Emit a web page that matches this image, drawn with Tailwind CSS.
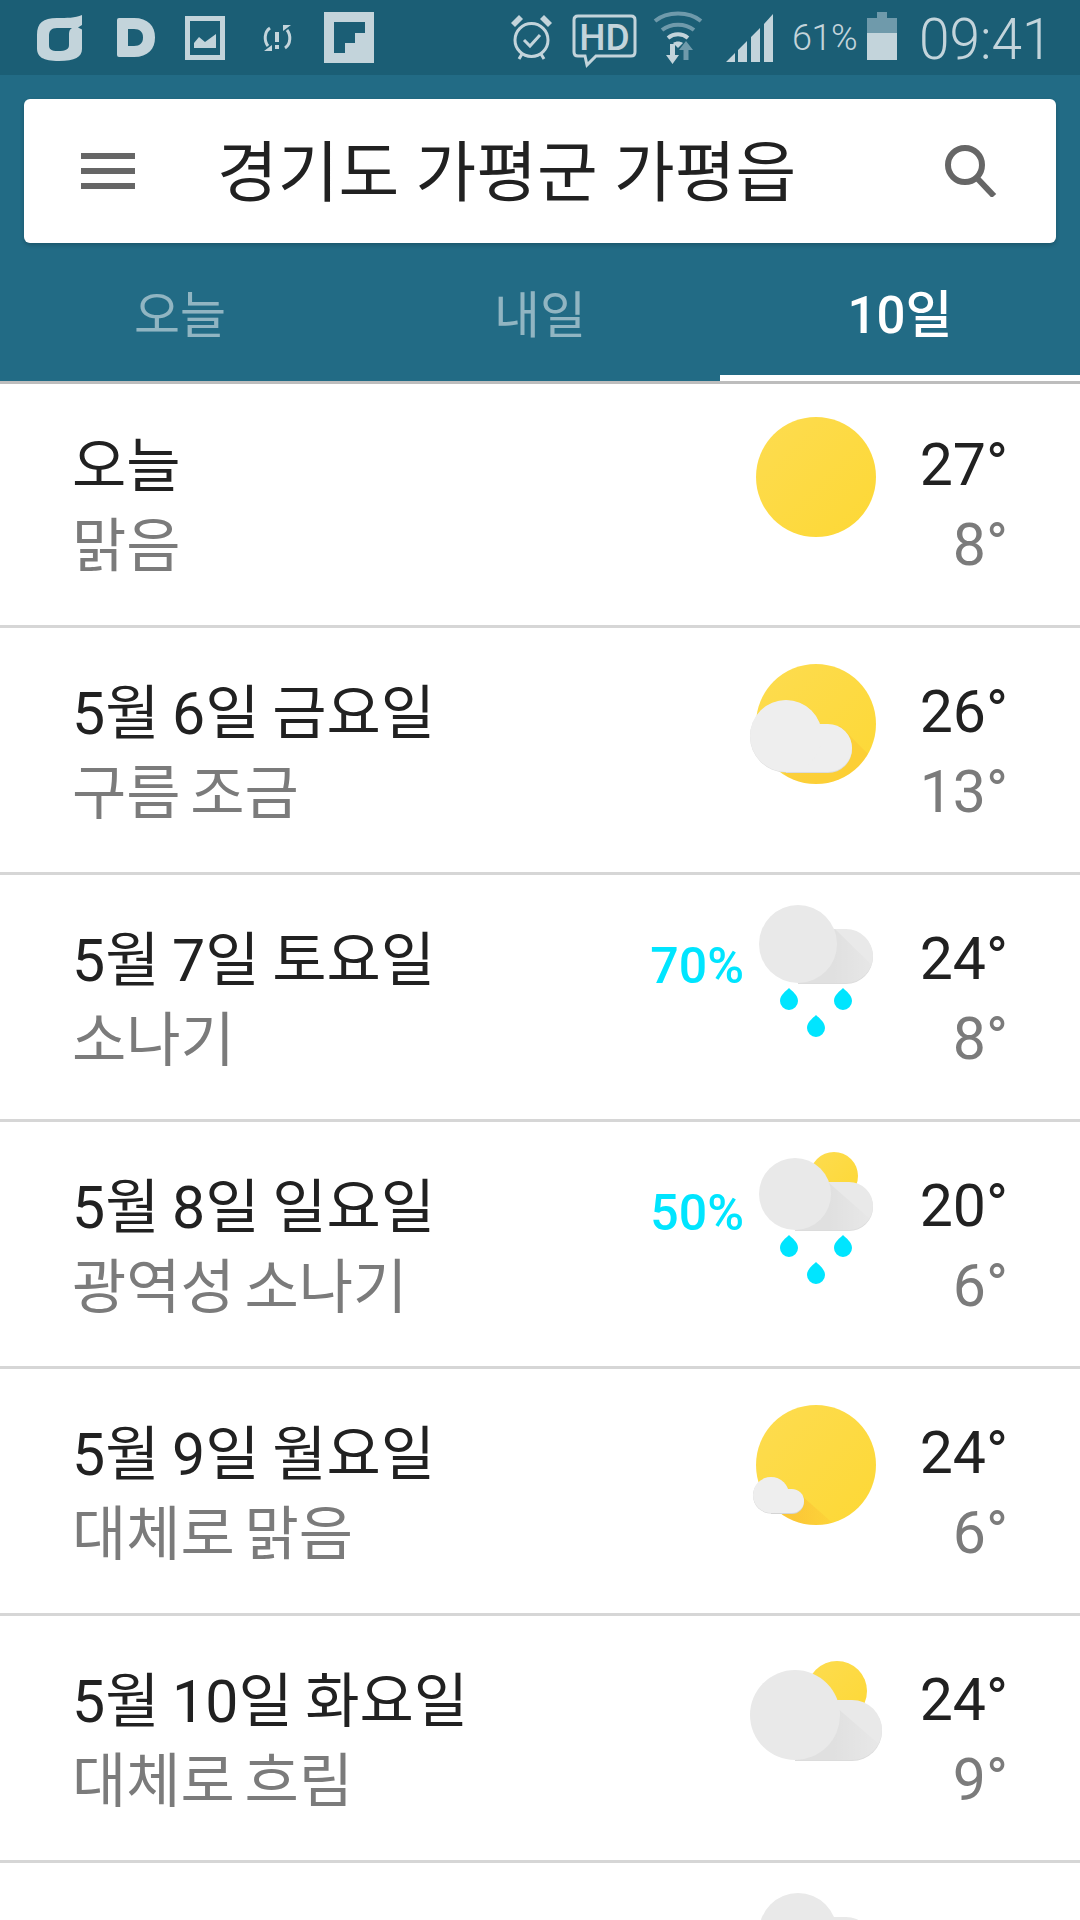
<!DOCTYPE html>
<html lang="ko">
<head>
    <meta charset="UTF-8">
    <meta name="viewport" content="width=device-width, initial-scale=1.0">
    <title>날씨</title>
    <script src="https://cdn.jsdelivr.net/npm/@tailwindcss/browser@4"></script>
</head>
<body class="bg-white w-[1080px] h-[1920px] overflow-hidden font-['Roboto','Noto_Sans_CJK_KR',sans-serif]">
    <!-- shared gradients -->
    <svg class="absolute w-0 h-0">
        <defs>
            <linearGradient id="sun" x1="0" y1="0" x2="1" y2="1"><stop offset="0" stop-color="#fddc50"/><stop offset="1" stop-color="#fdd835"/></linearGradient>
            <linearGradient id="shade"><stop offset="0.4" stop-color="#000000" stop-opacity="0.04"/><stop offset="1" stop-color="#000000" stop-opacity="0"/></linearGradient>
            <linearGradient id="sunshade"><stop offset="0.3" stop-color="#f57f17" stop-opacity="0.2"/><stop offset="1" stop-color="#f57f17" stop-opacity="0.02"/></linearGradient>
        </defs>
    </svg>

    <!-- status bar -->
    <div class="h-[75px] bg-[#1b5e75] flex items-center justify-between pl-[37px] pr-[40px] text-[#c3d4db]">
        <div class="flex items-center">
            <svg class="w-[45px] h-[46px]" viewBox="0 0 45 46"><path fill="#c3d4db" fill-rule="evenodd" d="M45 0V10L41 12.5L45 14.5V34C45 42 38 46 22 46C6 46 0 42 0 33V20C0 8 6 3 20 3C30 3 38 3 45 0ZM20 13C14 13 12 16 12 21V30C12 34 14 36 21 36C29 36 32 34 32 30V19C32 16 33 14 35 13Z"/></svg>
            <svg class="w-[38px] h-[39px] ml-[35px]" viewBox="0 0 38 39"><path fill="#c3d4db" fill-rule="evenodd" d="M2 0H17C31 0 38 8 38 19.5C38 31 31 39 17 39H2Q0 39 0 37V2Q0 0 2 0ZM11 11V28H17C23 28 26 25 26 19.5C26 14 23 11 17 11Z"/></svg>
            <svg class="w-[40px] h-[44px] ml-[30px]" viewBox="0 0 40 44"><path fill="#c3d4db" fill-rule="evenodd" d="M0 0H40V44H0ZM5 5V39H35V5Z"/><path fill="#c3d4db" d="M9 32V27L14 21L20 26L31 18V32Z"/></svg>
            <svg class="w-[29px] h-[26px] ml-[38px]" viewBox="0 0 29 26"><path fill="none" stroke="#c3d4db" stroke-width="3" d="M7 3C1 7 1 16 5 21M22 23C28 19 28 10 24 5"/><path fill="#c3d4db" d="M1 26L9 20V26ZM28 0L20 6V0ZM12 7H16V17H12ZM12 20H16V24H12Z"/></svg>
            <svg class="w-[50px] h-[51px] ml-[32px]" viewBox="0 0 50 51"><path fill="#c3d4db" fill-rule="evenodd" d="M0 0H50V51H0ZM10 10V41H21V31H31V21H41V10Z"/></svg>
        </div>
        <div class="flex items-center">
            <svg class="w-[43px] h-[47px]" viewBox="0 0 43 47"><circle cx="21.5" cy="26" r="16.5" fill="none" stroke="#c3d4db" stroke-width="3"/><path fill="none" stroke="#c3d4db" stroke-width="3" d="M14 26L20 32L30 21M12 40L9 45M31 40L34 45"/><path fill="#c3d4db" d="M1 9L9 1L13 5L5 13ZM42 9L34 1L30 5L38 13Z"/></svg>
            <svg class="w-[65px] h-[54px] ml-[19px] mt-[6px]" viewBox="0 0 65 54"><path fill="none" stroke="#c3d4db" stroke-width="3" d="M6 2H59Q63 2 63 6V38Q63 42 59 42H24L15 51L13 42H6Q2 42 2 38V6Q2 2 6 2Z"/><text x="32.5" y="36" text-anchor="middle" font-family="Roboto" font-size="37" font-weight="500" fill="#c3d4db">HD</text></svg>
            <svg class="w-[50px] h-[53px] ml-[16px]" viewBox="0 0 50 53"><path fill="none" stroke="#6f9aab" stroke-width="4" d="M2 10C14 0 36 0 48 10M9 19C18 12 32 12 41 19"/><path fill="none" stroke="#c3d4db" stroke-width="4" d="M15 27C21 22 29 22 35 27"/><path fill="#c3d4db" d="M20 32C23 30 27 30 30 32L25 37Z"/><path fill="#c3d4db" d="M17 33H22V44H26L19.5 53L13 44H17Z"/><path fill="#6f9aab" d="M33 30L40 39H35.5V49H30.5V39H26Z"/></svg>
            <svg class="w-[48px] h-[48px] ml-[23px]" viewBox="0 0 48 48"><path fill="#c3d4db" d="M0 48L9 39V48ZM12 36L21 27V48H12ZM25 23L34 14V48H25ZM38 10L47 0V48H38Z"/></svg>
            <span class="text-[36px] leading-none font-light ml-[18px] w-[65px] tracking-[-0.5px] whitespace-nowrap">61%</span>
            <div class="ml-[10px] w-[30px] h-[48px] flex flex-col items-center -mt-[3px]">
                <div class="w-[10px] h-[6px] bg-[#6f9aab]"></div>
                <div class="w-full h-[15px] bg-[#6f9aab]"></div>
                <div class="w-full h-[27px] bg-[#c3d4db]"></div>
            </div>
            <span class="text-[55px] leading-none font-light ml-[22px] mt-[4px] w-[121px] scale-y-[1.03] whitespace-nowrap">09:41</span>
        </div>
    </div>

    <!-- header -->
    <div class="h-[306px] bg-[#226b85] px-[24px] pt-[24px] flex flex-col">
        <div class="h-[144px] bg-white rounded-[6px] shadow-[0_2px_4px_rgba(0,0,0,0.2)] flex items-center pl-[57px] pr-[59px]">
            <svg class="w-[54px] h-[36px] shrink-0" viewBox="0 0 54 36"><path fill="#666666" d="M0 0H54V6H0ZM0 15H54V21H0ZM0 30H54V36H0Z"/></svg>
            <span class="ml-[82px] pt-[6px] text-[66px] leading-none text-[#212121]">경기도 가평군 가평읍</span>
            <svg class="ml-auto w-[52px] h-[52px]" viewBox="0 0 52 52"><circle cx="20" cy="20" r="17" fill="none" stroke="#666666" stroke-width="6"/><path stroke="#666666" stroke-width="6" d="M31 32L49 51"/></svg>
        </div>
        <div class="flex flex-1 -mx-[24px] relative">
            <div class="w-[360px] pt-[8px] flex items-center justify-center text-[50px] text-white/50">오늘</div>
            <div class="w-[360px] pt-[8px] flex items-center justify-center text-[50px] text-white/50">내일</div>
            <div class="w-[360px] pt-[8px] flex items-center justify-center text-[51px] text-white font-medium">10일</div>
            <div class="absolute right-0 bottom-0 w-[360px] h-[6px] bg-white"></div>
        </div>
    </div>
    <div class="h-[3px] bg-[#bdbdbd]"></div>

    <!-- list -->
    <div class="flex flex-col">
        <!-- today: 3px shorter than the others -->
        <div class="h-[244px] border-b-[3px] border-[#d6d6d6] flex items-start pl-[72px] pr-[72px] pt-[21px]">
            <div class="flex flex-col pt-[22px] text-[59px] leading-[80px]"><span class="text-[#212121]">오늘</span><span class="text-[#7b7b7b]">맑음</span></div>
            <div class="ml-auto flex items-center h-[144px]">
                <svg class="w-[144px] h-[144px]" viewBox="0 0 144 144"><circle cx="72" cy="72" r="60" fill="url(#sun)"/></svg>
            </div>
            <div class="w-[120px] pt-[20px] flex flex-col items-end text-[59px] leading-[80px]"><span class="text-[#212121]">27°</span><span class="text-[#7b7b7b]">8°</span></div>
        </div>

        <div class="h-[247px] border-b-[3px] border-[#d6d6d6] flex items-start pl-[72px] pr-[72px] pt-[24px]">
            <div class="flex flex-col pt-[22px] text-[59px] leading-[80px]"><span class="text-[#212121] [word-spacing:-2px]">5월 6일 금요일</span><span class="text-[#7b7b7b] [word-spacing:-5px]">구름 조금</span></div>
            <div class="ml-auto flex items-center h-[144px]">
                <svg class="w-[144px] h-[144px]" viewBox="0 0 144 144">
                    <defs><clipPath id="c2"><circle cx="72" cy="72" r="60"/></clipPath></defs>
                    <circle cx="72" cy="72" r="60" fill="url(#sun)"/>
                    <path clip-path="url(#c2)" fill="#f57f17" opacity="0.1" d="M96 74L146 124V144H60L30 110Z"/>
                    <path fill="#dcdcdc" d="M42 121H84A24 24 0 0 0 84 73H42Z"/>
                    <circle cx="42" cy="84.5" r="36" fill="#dcdcdc"/>
                    <path fill="#eeeeee" d="M42 120H84A24 24 0 0 0 84 72H42Z"/>
                    <circle cx="42" cy="84" r="36" fill="#eeeeee"/>
                </svg>
            </div>
            <div class="w-[120px] pt-[20px] flex flex-col items-end text-[59px] leading-[80px]"><span class="text-[#212121]">26°</span><span class="text-[#7b7b7b]">13°</span></div>
        </div>

        <div class="h-[247px] border-b-[3px] border-[#d6d6d6] flex items-start pl-[72px] pr-[72px] pt-[24px]">
            <div class="flex flex-col pt-[22px] text-[59px] leading-[80px]"><span class="text-[#212121] [word-spacing:-2px]">5월 7일 토요일</span><span class="text-[#7b7b7b] [word-spacing:-5px]">소나기</span></div>
            <div class="ml-auto flex items-center h-[144px]">
                <span class="text-[50px] leading-none font-medium text-[#00e5ff] -mt-[10px]">70%</span>
                <svg class="w-[144px] h-[144px]" viewBox="0 0 144 144">
                    <defs><clipPath id="c3"><path d="M54 84H102A27 27 0 0 0 102 30H54Z"/></clipPath></defs>
                    <path fill="#dcdcdc" d="M54 85H102A27 27 0 0 0 102 31H54Z"/>
                    <path fill="#e9e9e9" d="M54 84H102A27 27 0 0 0 102 30H54Z"/>
                    <path clip-path="url(#c3)" fill="url(#shade)" d="M91 30L140 78V90H54V30Z"/>
                    <circle cx="54" cy="45" r="39" fill="#e9e9e9"/>
                    <path fill="#00e5ff" d="M45 89C48 92 54 96 54 102A9 9 0 0 1 36 102C36 96 42 92 45 89Z"/>
                    <path fill="#00e5ff" d="M99 89C102 92 108 96 108 102A9 9 0 0 1 90 102C90 96 96 92 99 89Z"/>
                    <path fill="#00e5ff" d="M72 116C75 119 81 123 81 129A9 9 0 0 1 63 129C63 123 69 119 72 116Z"/>
                </svg>
            </div>
            <div class="w-[120px] pt-[20px] flex flex-col items-end text-[59px] leading-[80px]"><span class="text-[#212121]">24°</span><span class="text-[#7b7b7b]">8°</span></div>
        </div>

        <div class="h-[247px] border-b-[3px] border-[#d6d6d6] flex items-start pl-[72px] pr-[72px] pt-[24px]">
            <div class="flex flex-col pt-[22px] text-[59px] leading-[80px]"><span class="text-[#212121] [word-spacing:-2px]">5월 8일 일요일</span><span class="text-[#7b7b7b] [word-spacing:-5px]">광역성 소나기</span></div>
            <div class="ml-auto flex items-center h-[144px]">
                <span class="text-[50px] leading-none font-medium text-[#00e5ff] -mt-[10px]">50%</span>
                <svg class="w-[144px] h-[144px]" viewBox="0 0 144 144">
                    <defs><clipPath id="c4"><path d="M51 84H105A24 24 0 0 0 105 36H51Z"/></clipPath></defs>
                    <circle cx="90" cy="30" r="24" fill="url(#sun)"/>
                    <path fill="#dcdcdc" d="M51 85H105A24 24 0 0 0 105 37H51Z"/>
                    <path fill="#e9e9e9" d="M51 84H105A24 24 0 0 0 105 36H51Z"/>
                    <path clip-path="url(#c4)" fill="url(#shade)" d="M84 36L134 80V90H51V36Z"/>
                    <circle cx="51" cy="48" r="36" fill="#e9e9e9"/>
                    <path fill="#00e5ff" d="M45 89C48 92 54 96 54 102A9 9 0 0 1 36 102C36 96 42 92 45 89Z"/>
                    <path fill="#00e5ff" d="M99 89C102 92 108 96 108 102A9 9 0 0 1 90 102C90 96 96 92 99 89Z"/>
                    <path fill="#00e5ff" d="M72 116C75 119 81 123 81 129A9 9 0 0 1 63 129C63 123 69 119 72 116Z"/>
                </svg>
            </div>
            <div class="w-[120px] pt-[20px] flex flex-col items-end text-[59px] leading-[80px]"><span class="text-[#212121]">20°</span><span class="text-[#7b7b7b]">6°</span></div>
        </div>

        <div class="h-[247px] border-b-[3px] border-[#d6d6d6] flex items-start pl-[72px] pr-[72px] pt-[24px]">
            <div class="flex flex-col pt-[22px] text-[59px] leading-[80px]"><span class="text-[#212121] [word-spacing:-2px]">5월 9일 월요일</span><span class="text-[#7b7b7b] [word-spacing:-5px]">대체로 맑음</span></div>
            <div class="ml-auto flex items-center h-[144px]">
                <svg class="w-[144px] h-[144px]" viewBox="0 0 144 144">
                    <defs><clipPath id="c5"><circle cx="72" cy="72" r="60"/></clipPath></defs>
                    <circle cx="72" cy="72" r="60" fill="url(#sun)"/>
                    <path clip-path="url(#c5)" fill="url(#sunshade)" d="M50 96L100 140H30Z"/>
                    <path fill="#d4d4d4" d="M27 121H48A12 12 0 0 0 48 97H27Z"/>
                    <circle cx="27" cy="102.5" r="18" fill="#d4d4d4"/>
                    <path fill="#eeeeee" d="M27 120H48A12 12 0 0 0 48 96H27Z"/>
                    <circle cx="27" cy="102" r="18" fill="#eeeeee"/>
                </svg>
            </div>
            <div class="w-[120px] pt-[20px] flex flex-col items-end text-[59px] leading-[80px]"><span class="text-[#212121]">24°</span><span class="text-[#7b7b7b]">6°</span></div>
        </div>

        <div class="h-[247px] border-b-[3px] border-[#d6d6d6] flex items-start pl-[72px] pr-[72px] pt-[24px]">
            <div class="flex flex-col pt-[22px] text-[59px] leading-[80px]"><span class="text-[#212121] [word-spacing:-2px]">5월 10일 화요일</span><span class="text-[#7b7b7b] [word-spacing:-5px]">대체로 흐림</span></div>
            <div class="ml-auto flex items-center h-[144px]">
                <svg class="w-[144px] h-[144px]" viewBox="0 0 144 144">
                    <defs><clipPath id="c6"><path d="M51 120H108A30 30 0 0 0 108 60H51Z"/></clipPath></defs>
                    <circle cx="93" cy="51" r="30" fill="url(#sun)"/>
                    <path fill="#dcdcdc" d="M51 121H108A30 30 0 0 0 108 61H51Z"/>
                    <path fill="#e9e9e9" d="M51 120H108A30 30 0 0 0 108 60H51Z"/>
                    <path clip-path="url(#c6)" fill="url(#shade)" d="M84 60L144 112V125H51V60Z"/>
                    <circle cx="51" cy="75" r="45" fill="#e9e9e9"/>
                </svg>
            </div>
            <div class="w-[120px] pt-[20px] flex flex-col items-end text-[59px] leading-[80px]"><span class="text-[#212121]">24°</span><span class="text-[#7b7b7b]">9°</span></div>
        </div>

        <!-- next row is cut off by the bottom of the screen -->
        <div class="h-[57px] overflow-hidden flex items-start pl-[72px] pr-[72px] pt-[24px]">
            <div class="ml-auto mr-[120px] flex items-start h-[33px]">
                <svg class="w-[144px] h-[33px]" viewBox="0 0 144 33">
                    <path fill="#e9e9e9" d="M54 84H102A27 27 0 0 0 102 30H54Z"/>
                    <circle cx="54" cy="45" r="39" fill="#e9e9e9"/>
                </svg>
            </div>
        </div>
    </div>
</body>
</html>
